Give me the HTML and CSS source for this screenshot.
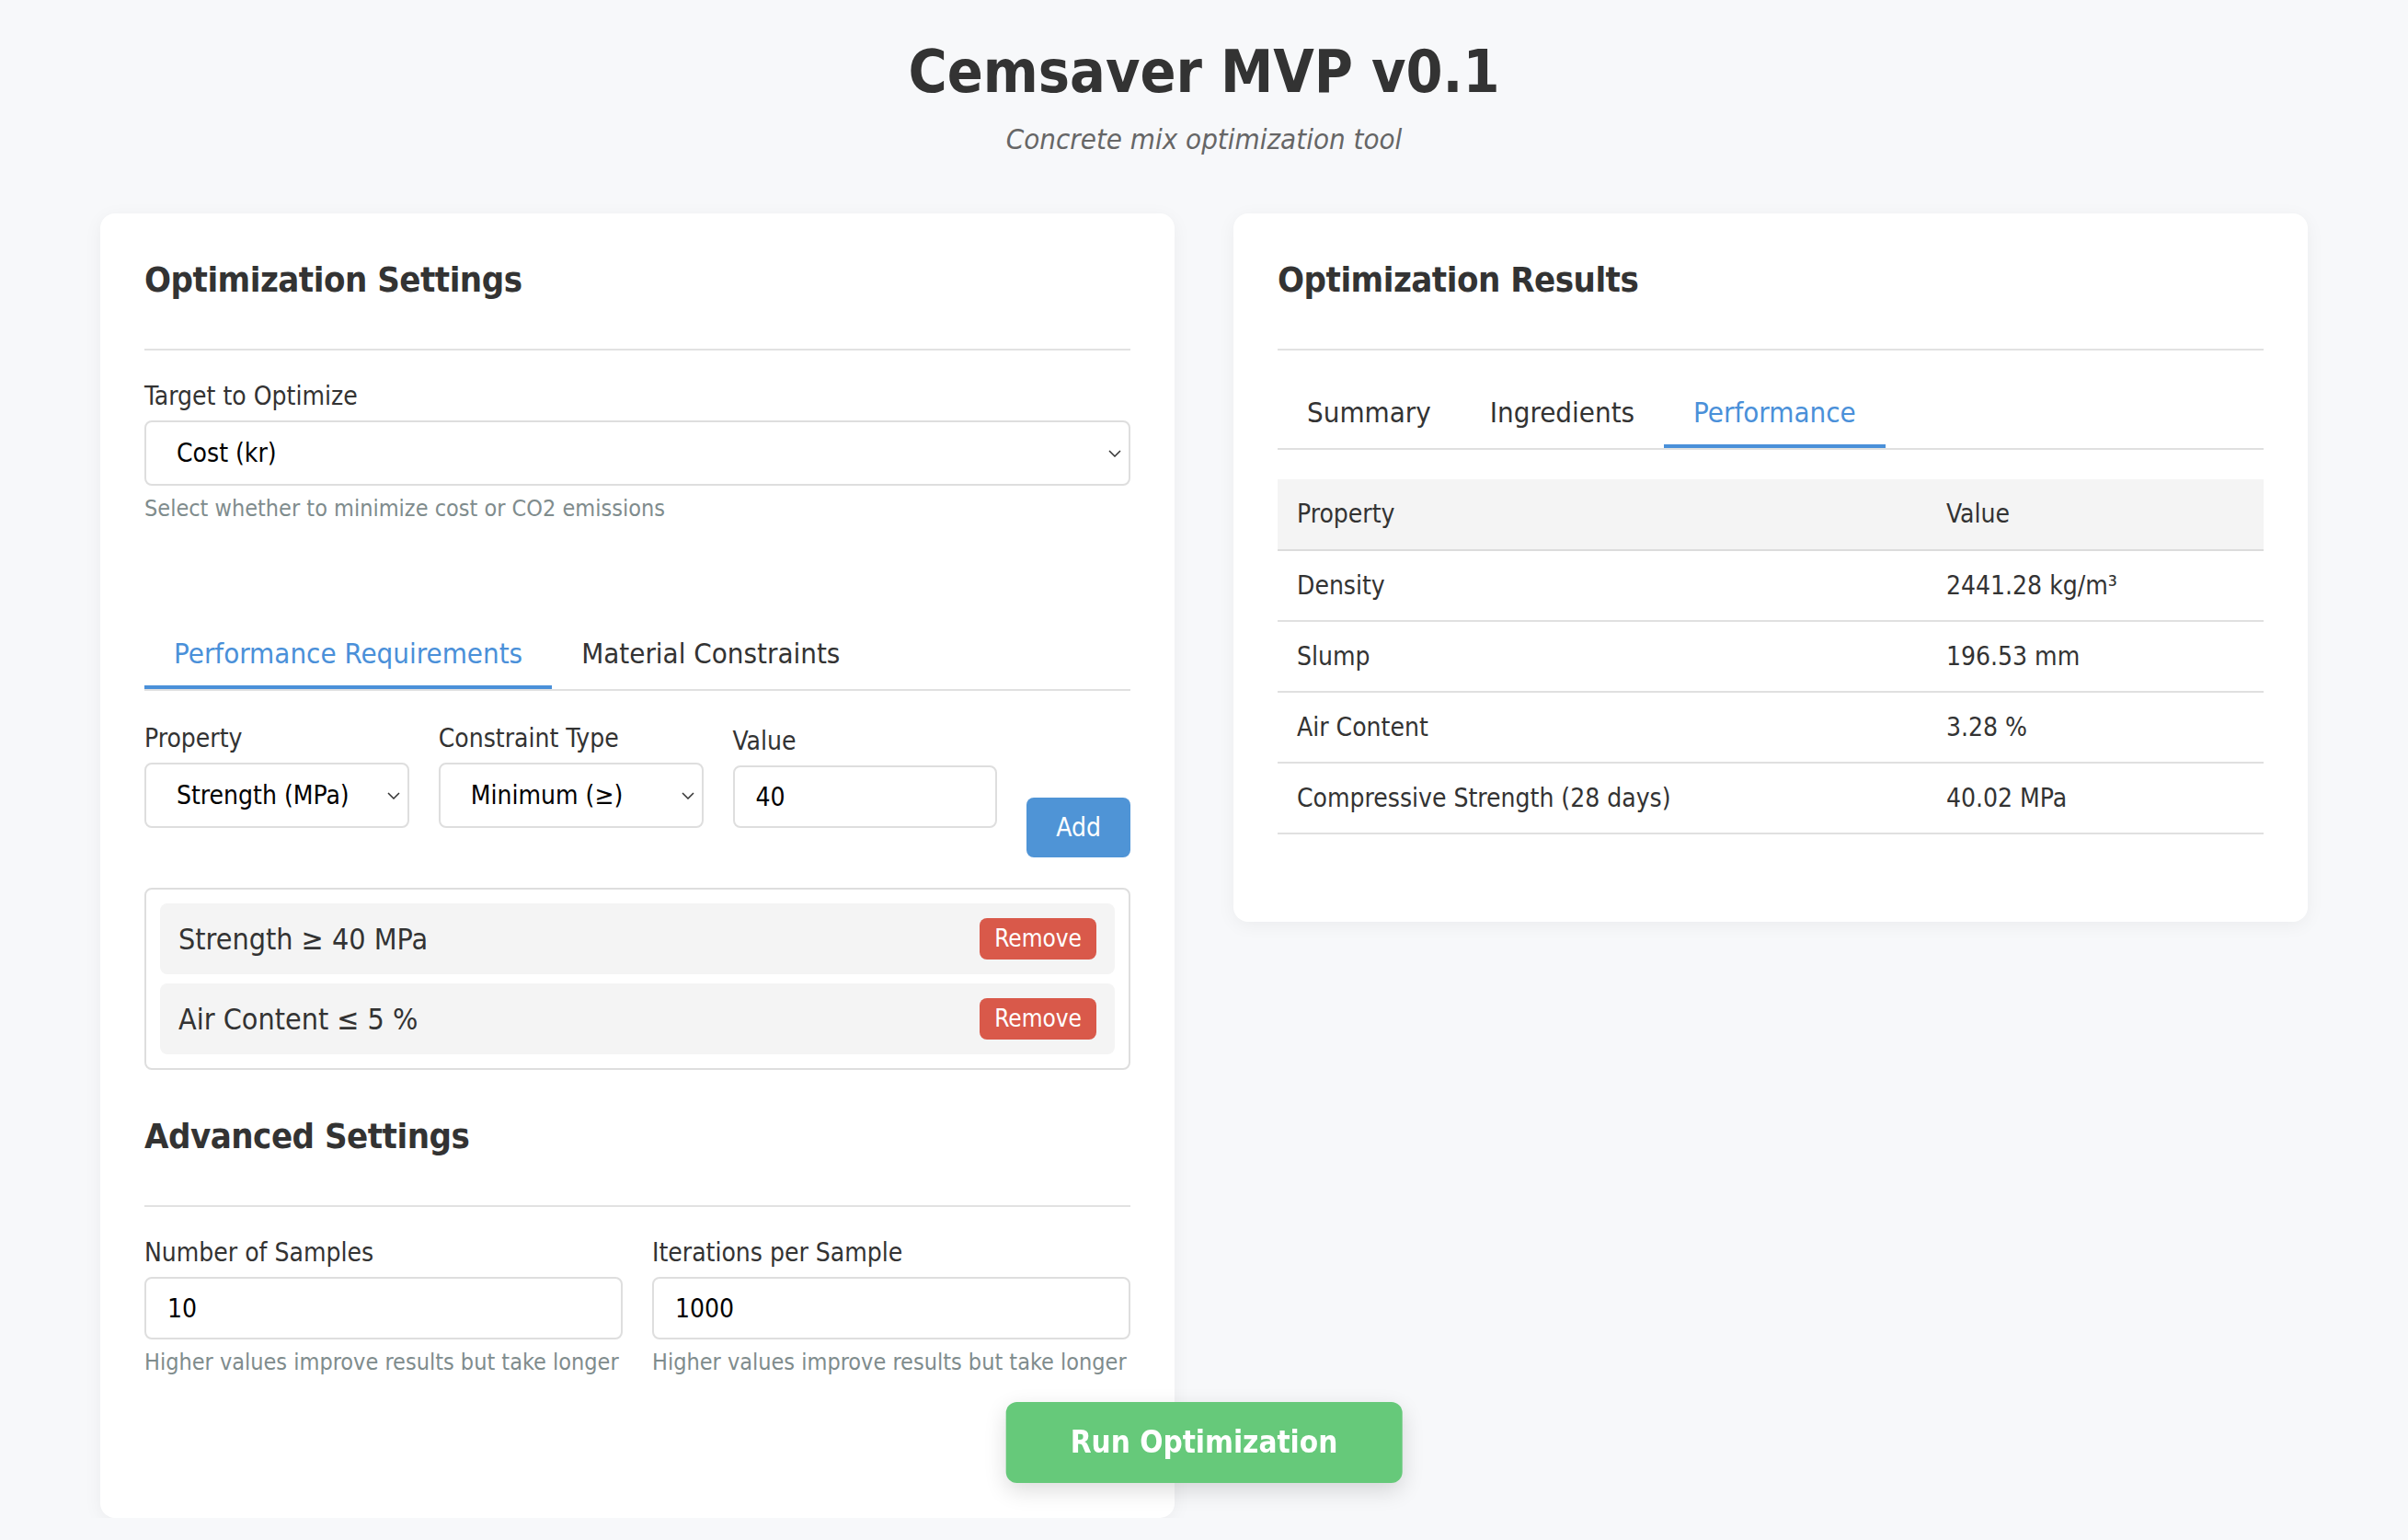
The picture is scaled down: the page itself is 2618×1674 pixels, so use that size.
FILE: index.html
```html
<!DOCTYPE html>
<html lang="en">
<head>
<meta charset="utf-8">
<title>Cemsaver MVP v0.1</title>
<link rel="stylesheet" href="styles.css">
</head>
<body>
<div class="page">
  <header class="header">
    <h1 class="title">Cemsaver MVP v0.1</h1>
    <p class="subtitle">Concrete mix optimization tool</p>
  </header>

  <main class="layout">
    <section class="card">
      <h2 class="card-title">Optimization Settings</h2>

      <div class="form-group">
        <label class="label">Target to Optimize</label>
        <div class="select-wrap">
          <select class="control select"><option>Cost (kr)</option><option>CO2 (kg)</option></select>
          <svg class="chevron" viewBox="0 0 14 8" width="14" height="8"><path d="M1 1 L7 7 L13 1" fill="none" stroke="#333" stroke-width="1.5"/></svg>
        </div>
        <div class="help">Select whether to minimize cost or CO2 emissions</div>
      </div>

      <div class="tabs tabs-settings">
        <div class="tab active">Performance Requirements</div>
        <div class="tab">Material Constraints</div>
      </div>

      <div class="constraint-form">
        <div class="form-group">
          <label class="label">Property</label>
          <div class="select-wrap">
            <select class="control select"><option>Strength (MPa)</option></select>
            <svg class="chevron" viewBox="0 0 14 8" width="14" height="8"><path d="M1 1 L7 7 L13 1" fill="none" stroke="#333" stroke-width="1.5"/></svg>
          </div>
        </div>
        <div class="form-group">
          <label class="label">Constraint Type</label>
          <div class="select-wrap">
            <select class="control select"><option>Minimum (≥)</option></select>
            <svg class="chevron" viewBox="0 0 14 8" width="14" height="8"><path d="M1 1 L7 7 L13 1" fill="none" stroke="#333" stroke-width="1.5"/></svg>
          </div>
        </div>
        <div class="form-group">
          <label class="label">Value</label>
          <input class="control input" type="text" value="40">
        </div>
        <button class="btn-add">Add</button>
      </div>

      <div class="constraint-list">
        <div class="constraint-item">
          <span>Strength ≥ 40 MPa</span>
          <button class="btn-remove">Remove</button>
        </div>
        <div class="constraint-item">
          <span>Air Content ≤ 5 %</span>
          <button class="btn-remove">Remove</button>
        </div>
      </div>

      <h2 class="card-title advanced">Advanced Settings</h2>

      <div class="two-col">
        <div class="form-group">
          <label class="label">Number of Samples</label>
          <input class="control input" type="text" value="10">
          <div class="help">Higher values improve results but take longer</div>
        </div>
        <div class="form-group">
          <label class="label">Iterations per Sample</label>
          <input class="control input" type="text" value="1000">
          <div class="help">Higher values improve results but take longer</div>
        </div>
      </div>
    </section>

    <section class="card">
      <h2 class="card-title">Optimization Results</h2>
      <div class="tabs tabs-results">
        <div class="tab">Summary</div>
        <div class="tab">Ingredients</div>
        <div class="tab active">Performance</div>
      </div>
      <table class="results-table">
        <colgroup><col class="col-prop"><col class="col-val"></colgroup>
        <thead>
          <tr><th>Property</th><th>Value</th></tr>
        </thead>
        <tbody>
          <tr><td>Density</td><td>2441.28 kg/m³</td></tr>
          <tr><td>Slump</td><td>196.53 mm</td></tr>
          <tr><td>Air Content</td><td>3.28 %</td></tr>
          <tr><td>Compressive Strength (28 days)</td><td>40.02 MPa</td></tr>
        </tbody>
      </table>
    </section>
  </main>

  <button class="run-btn">Run Optimization</button>
</div>
</body>
</html>
```

FILE: styles.css
```css
* { box-sizing: border-box; }

html, body {
  margin: 0;
  padding: 0;
}

body {
  background: #f7f8fa;
  color: #333333;
  font-family: "DejaVu Sans Condensed", "DejaVu Sans", sans-serif;
  font-stretch: condensed;
}

.page {
  max-width: 2400px;
  margin: 0 auto;
  padding-top: 40px;
}

.header {
  text-align: center;
  margin-bottom: 62px;
}

.title {
  margin: 0;
  font-size: 64px;
  line-height: 77px;
  font-weight: bold;
  color: #333333;
}

.subtitle {
  margin: 15px 0 0;
  font-size: 31px;
  line-height: 38px;
  font-style: italic;
  color: #666666;
}

.layout {
  display: grid;
  grid-template-columns: 1fr 1fr;
  gap: 64px;
  align-items: start;
}

.card {
  background: #ffffff;
  border-radius: 16px;
  padding: 48px;
  box-shadow: 0 4px 20px rgba(0, 0, 0, 0.05);
}

.card-title {
  margin: 0 0 32px;
  font-size: 38px;
  letter-spacing: -0.5px;
  line-height: 48px;
  font-weight: bold;
  color: #333333;
  padding-bottom: 51px;
  border-bottom: 2px solid #e2e2e2;
}

.card-title.advanced {
  margin-top: 48px;
}

.form-group {
  margin-bottom: 32px;
}

.label {
  display: block;
  font-size: 28px;
  line-height: 36px;
  margin-bottom: 8px;
  color: #333333;
}

.select-wrap {
  position: relative;
}

.control {
  display: block;
  width: 100%;
  font-family: inherit;
  font-stretch: condensed;
  font-size: 28px;
  color: #000000;
  background: #ffffff;
  border: 2px solid #dedede;
  border-radius: 8px;
  outline: none;
}

.select {
  appearance: none;
  -webkit-appearance: none;
  padding: 17px 40px 17px 33px;
  line-height: 33px;
  height: 71px;
}

.input {
  padding: 16px 23px;
  line-height: 32px;
  height: 68px;
}

.chevron {
  position: absolute;
  right: 10px;
  top: 50%;
  margin-top: -4px;
  pointer-events: none;
}

.help {
  margin-top: 10px;
  font-size: 25px;
  line-height: 30px;
  color: #7f8c8d;
}

.tabs {
  display: flex;
  border-bottom: 2px solid #e0e0e0;
}

.tabs-settings {
  margin-top: 107px;
  margin-bottom: 34px;
}

.tabs-results {
  margin-bottom: 32px;
}

.tab {
  padding: 16px 32px;
  font-size: 31px;
  line-height: 38px;
  color: #333333;
  border-bottom: 4px solid transparent;
}

.tab.active {
  color: #4a90d9;
  border-bottom-color: #4a90d9;
}

.constraint-form {
  display: grid;
  grid-template-columns: 1fr 1fr 1fr auto;
  column-gap: 32px;
  align-items: end;
  margin-bottom: 33px;
}

.btn-add {
  display: block;
  font-family: inherit;
  font-stretch: condensed;
  font-size: 28px;
  line-height: 33px;
  padding: 16px 32px;
  color: #ffffff;
  background: #4f94d6;
  border: none;
  border-radius: 8px;
}

.constraint-list {
  border: 2px solid #dedede;
  border-radius: 8px;
  padding: 15px 15px;
  display: flex;
  flex-direction: column;
  gap: 10px;
}

.constraint-item {
  display: flex;
  align-items: center;
  justify-content: space-between;
  background: #f4f4f4;
  border-radius: 8px;
  padding: 16px 20px;
  font-size: 32px;
  line-height: 38px;
  color: #333333;
}

.btn-remove {
  font-family: inherit;
  font-stretch: condensed;
  font-size: 26px;
  line-height: 31px;
  padding: 7px 16px;
  color: #ffffff;
  background: #d9594a;
  border: none;
  border-radius: 8px;
}

.two-col {
  display: grid;
  grid-template-columns: 1fr 1fr;
  column-gap: 32px;
  margin-bottom: 74px;
}

.results-table {
  width: 100%;
  border-collapse: collapse;
  table-layout: fixed;
  margin-bottom: 47px;
  font-size: 28px;
}

.col-prop { width: 706px; }

.results-table th,
.results-table td {
  text-align: left;
  font-weight: normal;
  padding: 20px 21px;
  line-height: 35px;
  color: #333333;
  border-bottom: 2px solid #e0e0e0;
}

.results-table th {
  background: #f4f4f4;
  line-height: 36px;
  border-bottom-color: #dcdcdc;
}

.run-btn {
  position: fixed;
  left: 50%;
  bottom: 62px;
  transform: translateX(-50%);
  font-family: inherit;
  font-stretch: condensed;
  font-size: 33px;
  line-height: 40px;
  font-weight: bold;
  padding: 24px 70px;
  color: #ffffff;
  background: #66c97a;
  border: none;
  border-radius: 12px;
  box-shadow: 0 8px 24px rgba(0, 0, 0, 0.14);
}
```
